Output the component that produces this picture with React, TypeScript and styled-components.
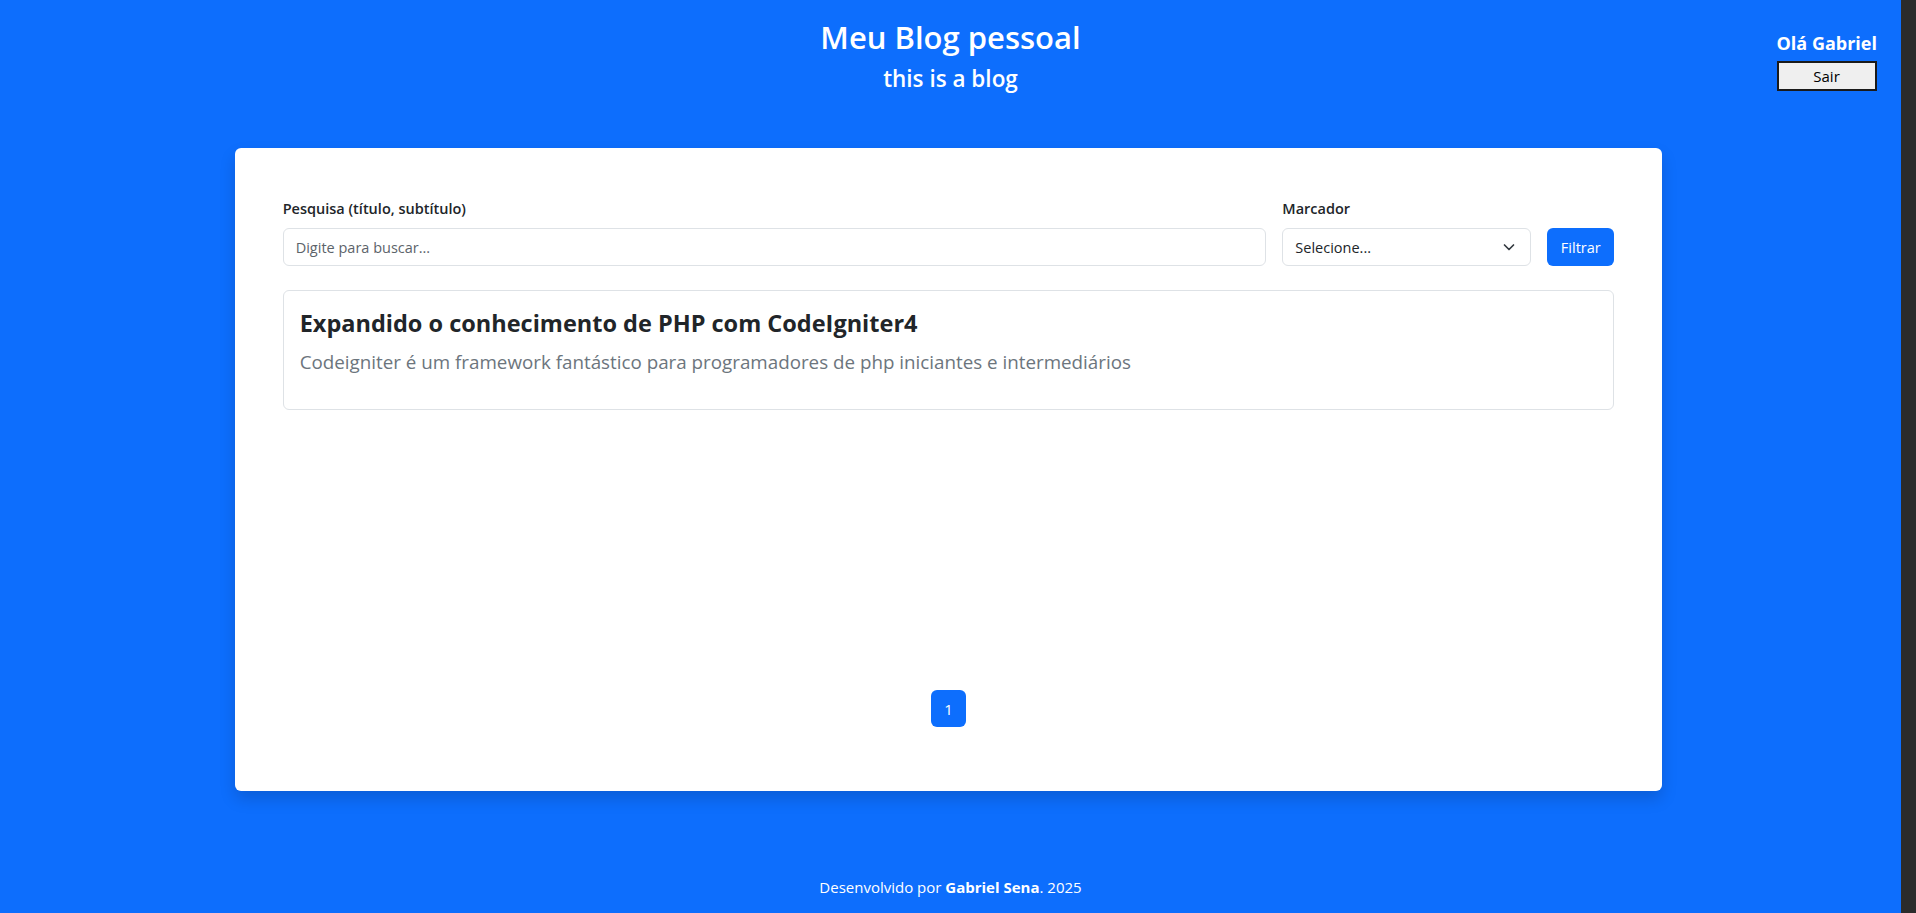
import React from "react";
import styled, { createGlobalStyle } from "styled-components";

const Global = createGlobalStyle`
  html {
    background: #0d6efd;
  }
  body {
    margin: 0;
    background: #0d6efd;
    font-family: "Open Sans", "Noto Sans", sans-serif;
    color: #212529;
  }
  * { box-sizing: border-box; }
`;

const Page = styled.div`
  min-height: 913px;
  display: flex;
  flex-direction: column;
  border-right: 15px solid #2b2b2b;
`;

const Header = styled.header`
  display: grid;
  grid-template-columns: 1fr auto 1fr;
  padding: 19px 24px 0 24px;
  color: #fff;
`;

const TitleBlock = styled.div`
  grid-column: 2;
  display: flex;
  flex-direction: column;
  align-items: center;
`;

const SiteTitle = styled.h1`
  margin: 0 0 8px 0;
  font-size: 31px;
  font-weight: 600;
  line-height: 1.2;
`;

const SiteSubtitle = styled.h2`
  margin: 0;
  font-size: 22.5px;
  font-weight: 600;
  line-height: 1.3;
`;

const UserBox = styled.div`
  grid-column: 3;
  justify-self: end;
  display: flex;
  flex-direction: column;
  align-items: stretch;
  padding-top: 13px;
  gap: 7px;
`;

const Greeting = styled.div`
  font-size: 18px;
  font-weight: 700;
  text-align: center;
  line-height: 22px;
`;

const LogoutButton = styled.button`
  width: 100px;
  height: 30px;
  background: #efefef;
  border: 2px solid #1a1a1a;
  font-family: "Open Sans", sans-serif;
  font-size: 15px;
  color: #000;
  padding: 0;
`;

const Main = styled.main`
  flex: 1;
  display: flex;
  justify-content: center;
  padding-top: 55px;
`;

const Card = styled.section`
  width: 75.1%;
  margin-right: 4px;
  background: #fff;
  border-radius: 6px;
  box-shadow: 0 8px 16px rgba(0, 0, 0, 0.15);
  padding: 50px 48px 64px 48px;
  display: flex;
  flex-direction: column;
  height: 643px;
`;

const FilterRow = styled.form`
  display: flex;
  align-items: flex-end;
  gap: 16px;
  margin-bottom: 24px;
`;

const Field = styled.div<{ $grow?: boolean; $width?: number }>`
  display: flex;
  flex-direction: column;
  ${(p) => (p.$grow ? "flex: 1;" : "")}
  ${(p) => (p.$width ? `width: ${p.$width}px;` : "")}
`;

const Label = styled.label`
  font-size: 14.5px;
  font-weight: 600;
  line-height: 22px;
  margin-bottom: 8px;
  color: #212529;
`;

const TextInput = styled.input`
  height: 38px;
  border: 1px solid #dee2e6;
  border-radius: 6px;
  padding: 6px 12px;
  font-family: "Open Sans", sans-serif;
  font-size: 14.5px;
  color: #212529;
  &::placeholder {
    color: #5c636a;
  }
`;

const SelectBox = styled.div`
  position: relative;
  height: 38px;
  border: 1px solid #dee2e6;
  border-radius: 6px;
  padding: 0 14px 0 12px;
  display: flex;
  align-items: center;
  justify-content: space-between;
  font-size: 14.5px;
  color: #212529;
  background: #fff;
`;

const FilterButton = styled.button`
  height: 38px;
  width: 67px;
  padding: 0;
  border: none;
  border-radius: 6px;
  background: #0d6efd;
  color: #fff;
  font-family: "Open Sans", sans-serif;
  font-size: 14.5px;
`;

const PostList = styled.div`
  flex: 1;
  display: flex;
  flex-direction: column;
`;

const PostCard = styled.article`
  border: 1px solid #dee2e6;
  border-radius: 6px;
  padding: 17px 16px 32px 16px;
`;

const PostTitle = styled.h3`
  margin: 0 0 8px 0;
  font-size: 23.5px;
  font-weight: 700;
  line-height: 1.3;
  color: #212529;
`;

const PostSubtitle = styled.p`
  margin: 0;
  font-size: 18.8px;
  line-height: 30px;
  color: #6c757d;
`;

const Pagination = styled.nav`
  display: flex;
  justify-content: center;
`;

const PageLink = styled.a<{ $active?: boolean }>`
  display: flex;
  align-items: center;
  justify-content: center;
  width: 35px;
  height: 37px;
  border-radius: 6px;
  background: ${(p) => (p.$active ? "#0d6efd" : "#fff")};
  color: ${(p) => (p.$active ? "#fff" : "#0d6efd")};
  font-size: 15px;
  text-decoration: none;
`;

const Footer = styled.footer`
  text-align: center;
  color: #fff;
  font-size: 15px;
  padding: 58px 0 16px 0;
  b { font-weight: 700; }
`;

const Chevron = () => (
  <svg width="14" height="14" viewBox="0 0 14 14" fill="none">
    <path d="M2.5 5l4.5 4.5 4.5-4.5" stroke="#343a40" strokeWidth="1.7" strokeLinecap="round" strokeLinejoin="round" />
  </svg>
);

export default function App() {
  return (
    <>
      <Global />
      <Page>
        <Header>
          <TitleBlock>
            <SiteTitle>Meu Blog pessoal</SiteTitle>
            <SiteSubtitle>this is a blog</SiteSubtitle>
          </TitleBlock>
          <UserBox>
            <Greeting>Olá Gabriel</Greeting>
            <LogoutButton>Sair</LogoutButton>
          </UserBox>
        </Header>
        <Main>
          <Card>
            <FilterRow onSubmit={(e) => e.preventDefault()}>
              <Field $grow>
                <Label>Pesquisa (título, subtítulo)</Label>
                <TextInput placeholder="Digite para buscar..." />
              </Field>
              <Field $width={249}>
                <Label>Marcador</Label>
                <SelectBox>
                  <span>Selecione...</span>
                  <Chevron />
                </SelectBox>
              </Field>
              <FilterButton type="submit">Filtrar</FilterButton>
            </FilterRow>
            <PostList>
              <PostCard>
                <PostTitle>Expandido o conhecimento de PHP com CodeIgniter4</PostTitle>
                <PostSubtitle>
                  Codeigniter é um framework fantástico para programadores de php iniciantes e intermediários
                </PostSubtitle>
              </PostCard>
            </PostList>
            <Pagination>
              <PageLink $active href="#">1</PageLink>
            </Pagination>
          </Card>
        </Main>
        <Footer>
          Desenvolvido por <b>Gabriel Sena</b>. 2025
        </Footer>
      </Page>
    </>
  );
}
